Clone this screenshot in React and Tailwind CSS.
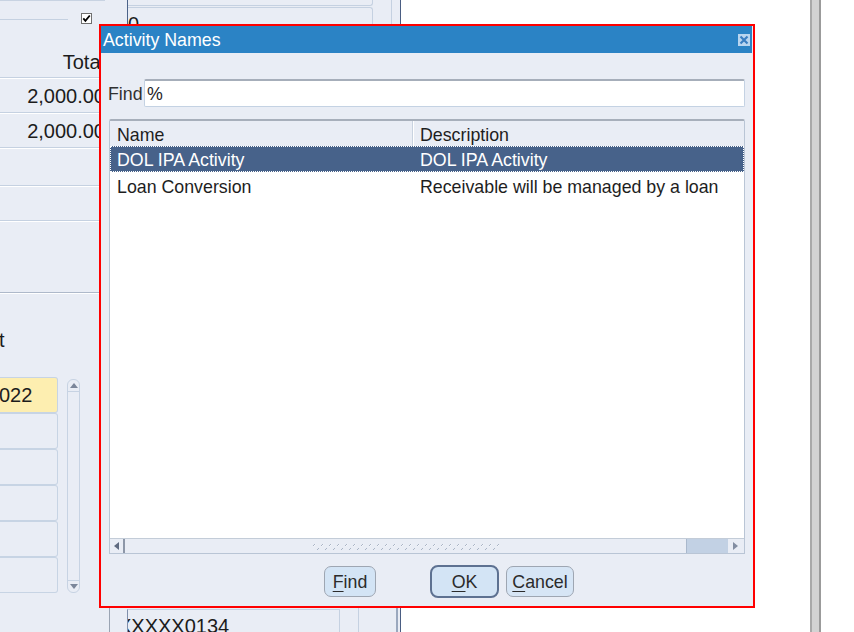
import React from "react";

function Sep({ dark }) {
  return (
    <div
      className={
        dark
          ? "h-[2px] border-t border-[#aeb9ca] border-b border-b-white"
          : "h-[2px] border-t border-[#c5d1e1] border-b border-b-white"
      }
    />
  );
}

function Field({ yellow, children }) {
  return (
    <div
      className={
        "h-[36px] rounded-r-[3px] border border-l-0 border-[#c7d4e4] flex items-center overflow-hidden " +
        (yellow ? "bg-[#fdeeb0]" : "bg-[#e9edf5]")
      }
    >
      {children}
    </div>
  );
}

function CloseIcon() {
  return (
    <svg width="12" height="12" viewBox="0 0 12 12">
      <rect x="0" y="0" width="12" height="12" fill="#b9d5ef" />
      <path d="M2.5 2.5 L9.5 9.5 M9.5 2.5 L2.5 9.5" stroke="#3a7ec1" strokeWidth="2.2" />
    </svg>
  );
}

function Grip() {
  return (
    <svg width="187" height="9" viewBox="0 0 187 9">
      <defs>
        <pattern id="grip" width="8" height="9" patternUnits="userSpaceOnUse">
          <path d="M1 4 L3 2 M5 8 L7 6" stroke="#aab5c6" strokeWidth="1" />
          <path d="M1.5 4.5 L3.5 2.5" stroke="#ffffff" strokeWidth="0.6" />
        </pattern>
      </defs>
      <rect width="187" height="9" fill="url(#grip)" />
    </svg>
  );
}

export default function App() {
  return (
    <div className="relative w-[854px] h-[632px] overflow-hidden bg-white flex font-['Liberation_Sans',Arial,sans-serif]">
      {/* Background form panel */}
      <div className="w-[401px] h-full shrink-0 bg-[#e9edf5] border-r border-[#4a5d82] flex text-[20px] leading-[24px] text-[#1c1c1c]">
        {/* Column A */}
        <div className="w-[105px] shrink-0 flex flex-col">
          <div className="h-[77px] border-t border-[#c8d3e2] flex flex-col">
            <div className="h-[23px] flex items-start">
              <div className="w-[68px] h-px bg-[#c5d1e1] mt-[18px]" />
              <div className="ml-[13px] mt-[12px] w-[11px] h-[11px] border border-[#6f6f6f] bg-white flex items-center justify-center">
                <svg width="9" height="9" viewBox="0 0 9 9">
                  <path d="M1.3 4.3 L3.4 6.8 L7.8 1.5" stroke="#000" strokeWidth="1.8" fill="none" />
                </svg>
              </div>
            </div>
            <div className="mt-[26px] text-right">Total</div>
          </div>
          <Sep />
          <div className="h-[33px] flex items-center justify-end">2,000.00</div>
          <Sep />
          <div className="h-[33px] flex items-center justify-end">2,000.00</div>
          <Sep />
          <div className="h-[36px]" />
          <Sep />
          <div className="h-[33px]" />
          <Sep />
          <div className="h-[70px]" />
          <Sep dark />
          <div className="mt-[34px] h-[24px] ml-[-1px]">t</div>
          <div className="mt-[25px] flex items-start">
            <div className="w-[58px] flex flex-col">
              <Field yellow>
                <span className="ml-[-1px]">022</span>
              </Field>
              <Field />
              <Field />
              <Field />
              <Field />
              <Field />
            </div>
            <div className="ml-[9px] mt-[2px] w-[13px] h-[214px] rounded-[6px] border border-[#c7d3e3] flex flex-col justify-between">
              <div className="h-[12px] border-b border-[#c7d3e3] flex items-center justify-center">
                <svg width="8" height="5" viewBox="0 0 8 5">
                  <path d="M0 5 L4 0 L8 5 Z" fill="#7b869a" />
                </svg>
              </div>
              <div className="h-[12px] border-t border-[#c7d3e3] flex items-center justify-center">
                <svg width="8" height="5" viewBox="0 0 8 5">
                  <path d="M0 0 L4 5 L8 0 Z" fill="#7b869a" />
                </svg>
              </div>
            </div>
          </div>
        </div>

        {/* Column B (mostly hidden behind dialog) */}
        <div className="w-[295px] shrink-0 flex flex-col justify-between">
          <div className="h-[24px] flex">
            <div className="w-[22px]" />
            <div className="w-px bg-[#4b6288]" />
            <div className="w-[245px] flex flex-col">
              <div className="h-[6px] border-b border-r border-[#c5d1e1] rounded-br-[3px]" />
              <div className="mt-px flex-1 border-t border-r border-[#c5d1e1] rounded-tr-[3px] pt-[4px] overflow-hidden">
                <span>0</span>
              </div>
            </div>
            <div className="w-[18px]" />
            <div className="w-px bg-[#c5d1e1]" />
          </div>
          <div className="h-[25px] flex">
            <div className="w-[4px]" />
            <div className="w-px bg-[#9aa4b3]" />
            <div className="w-[17px]" />
            <div className="w-[213px] border-t border-l border-r border-[#c5d1e1] border-l-[#7f8fab] mt-[2px] pt-[4px] overflow-hidden whitespace-nowrap">
              <span className="ml-[-10px]">XXXXX0134</span>
            </div>
            <div className="w-[18px]" />
            <div className="w-px bg-[#c5d1e1]" />
            <div className="w-[37px]" />
            <div className="w-[2px] bg-[#9aa8be]" />
          </div>
        </div>
      </div>

      {/* Right white area with gray bar */}
      <div className="flex-1 flex">
        <div className="w-[409px] shrink-0" />
        <div className="w-[11px] shrink-0 bg-[#d3d3d3] border-l-2 border-[#a9a9a9] border-r-2 border-r-[#9b9b9b]" />
        <div className="flex-1" />
      </div>

      {/* Dialog */}
      <div className="absolute left-[99px] top-[24px] w-[656px] h-[584px] border-2 border-[#ff0000] bg-[#e9edf5] flex flex-col text-[17.8px] leading-[20px]">
        <div className="h-[27px] shrink-0 bg-[#2b83c5] mr-px flex items-center pl-[2px] pt-px text-white">
          <span>Activity Names</span>
          <div className="ml-auto mr-[2px] w-[12px] h-[12px]">
            <CloseIcon />
          </div>
        </div>

        <div className="mt-[26px] h-[28px] shrink-0 flex items-center pl-[7px] pr-[8px]">
          <span className="w-[36px] pt-px text-[#303030]">Find</span>
          <div className="flex-1 h-full bg-white rounded-[2px] border border-[#c4d2e3] border-t-2 border-t-[#a6aeba] flex items-center pl-[2px] text-[#1e1e1e]">
            %
          </div>
        </div>

        <div className="mt-[12px] mx-[8px] h-[435px] shrink-0 flex flex-col border border-[#b9c5d5] border-t-2 border-t-[#a7afbb] rounded-t-[2px] bg-white text-[#1e1e1e]">
          <div className="h-[25px] shrink-0 bg-[#e9edf5] flex">
            <div className="w-[303px] pl-[7px] pt-[2px] border-r border-[#c9d3e0] flex items-center">Name</div>
            <div className="flex-1 pl-[6px] pt-[2px] border-l border-white flex items-center">Description</div>
          </div>
          <div className="h-[26px] shrink-0 bg-[#47628a] text-white border border-dotted border-white flex">
            <div className="w-[303px] pl-[6px] pt-[2px] flex items-center">DOL IPA Activity</div>
            <div className="flex-1 pl-[6px] pt-[2px] flex items-center">DOL IPA Activity</div>
          </div>
          <div className="h-[27px] shrink-0 flex">
            <div className="w-[304px] pl-[7px] pt-[2px] flex items-center">Loan Conversion</div>
            <div className="flex-1 pl-[6px] pt-[2px] flex items-center">Receivable will be managed by a loan</div>
          </div>
          <div className="flex-1" />
          <div className="h-[15px] shrink-0 border-t border-[#c3ccd8] bg-[#e9edf5] flex">
            <div className="w-[15px] rounded-l-[5px] border-r-2 border-[#8d97a8] flex items-center justify-center">
              <svg width="5" height="8" viewBox="0 0 5 8">
                <path d="M5 0 L0 4 L5 8 Z" fill="#5f6b80" />
              </svg>
            </div>
            <div className="w-[561px] flex items-center justify-center">
              <Grip />
            </div>
            <div className="w-[42px] bg-[#c2d1e4] border-l border-[#a9b8cc]" />
            <div className="w-[14px] rounded-r-[5px] flex items-center justify-center">
              <svg width="5" height="8" viewBox="0 0 5 8">
                <path d="M0 0 L5 4 L0 8 Z" fill="#838ea2" />
              </svg>
            </div>
          </div>
        </div>

        <div className="mt-[11px] h-[33px] shrink-0 flex items-center pl-[223px] text-[#2b2b2b]">
          <button className="h-[31px] w-[52px] pt-px rounded-[7px] border border-[#9ea6b2] bg-[#d3e4f5] flex items-center justify-center">
            <span className="underline underline-offset-[3px]">F</span>ind
          </button>
          <button className="ml-[54px] h-[33px] w-[69px] pt-px rounded-[8px] border-2 border-[#5d7191] bg-[#d3e4f5] flex items-center justify-center">
            <span className="underline underline-offset-[3px]">O</span>K
          </button>
          <button className="ml-[7px] h-[31px] w-[68px] pt-px rounded-[7px] border border-[#9ea6b2] bg-[#d6e5f5] flex items-center justify-center">
            <span className="underline underline-offset-[3px]">C</span>ancel
          </button>
        </div>
      </div>
    </div>
  );
}
